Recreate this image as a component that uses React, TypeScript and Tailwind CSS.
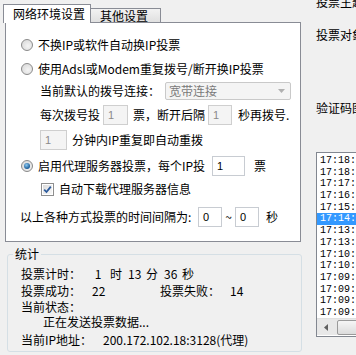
import React from 'react';

const Radio = ({ checked }: { checked?: boolean }) => (
  <span className="w-[12px] h-[12px] rounded-full border border-[#8a8a8a] bg-[radial-gradient(circle_at_60%_60%,#f4f4f4,#d4d4d4)] flex items-center justify-center shrink-0">
    {checked && (
      <span className="w-[6px] h-[6px] rounded-full bg-[radial-gradient(circle_at_40%_35%,#8ccaf2,#1a5a96_70%)]" />
    )}
  </span>
);

const Check = () => (
  <span className="w-[13px] h-[13px] border border-[#8f8f8f] bg-white flex items-center justify-center shrink-0">
    <span className="w-[9px] h-[9px] bg-gradient-to-br from-[#dcdcdc] to-[#f8f8f8] flex items-center justify-center">
      <svg width="9" height="9" viewBox="0 0 9 9">
        <path d="M1.2 4.6 L3.5 7 L7.8 1.6" fill="none" stroke="#2b5a9c" strokeWidth="1.8" />
      </svg>
    </span>
  </span>
);

const Box = ({ value, disabled, w }: { value: string; disabled?: boolean; w: string }) => (
  <span
    className={`${w} h-[20px] flex items-center pl-[4px] text-[11px] font-['Liberation_Sans',sans-serif] border ${
      disabled ? 'bg-[#f4f4f4] border-[#cfcfcf] text-[#8a8a8a]' : 'bg-white border-[#c8ccd2] text-black'
    }`}
  >
    {value}
  </span>
);

const logs = ['17:18:', '17:18:', '17:17:', '17:16:', '17:15:', '17:14:', '17:13:', '17:13:', '17:10:', '17:10:', '17:09:', '17:09:', '17:09:', '17:09:'];

export default function App() {
  return (
    <div className="w-[356px] h-[355px] bg-[#f0f0f0] overflow-hidden flex text-[12px] leading-[14px] text-black font-['Noto_Sans_CJK_SC','Liberation_Sans',sans-serif]">
      {/* 左侧设置区 */}
      <div className="w-[303px] shrink-0 pl-[5px] pt-[4px] flex flex-col">
        <div className="flex items-end h-[18px]">
          <div className="-ml-[2px] w-[88px] h-[19px] -mb-px relative z-10 bg-white border border-b-0 border-[#898c95] pl-[9px] pt-[2px]">
            网络环境设置
          </div>
          <div className="w-[70px] h-[14px] border border-b-0 border-l-0 border-[#898c95] bg-gradient-to-b from-[#f2f2f2] to-[#e0e0e0] pl-[9px] leading-[13px]">
            其他设置
          </div>
        </div>
        <div className="w-[296px] h-[220px] border border-[#898c95] bg-white flex flex-col">
          <div className="mt-[15px] h-[14px] flex items-center pl-[15px] gap-[5px]">
            <Radio />
            <span>不换IP或软件自动换IP投票</span>
          </div>
          <div className="mt-[10px] h-[14px] flex items-center pl-[15px] gap-[5px]">
            <Radio />
            <span>使用Adsl或Modem重复拨号/断开换IP投票</span>
          </div>
          <div className="mt-[6px] h-[18px] flex items-center pl-[34px]">
            <span className="w-[125px]">当前默认的拨号连接：</span>
            <span className="w-[126px] h-[18px] border border-[#c9c9c9] rounded-[2px] bg-[#f4f4f4] flex items-center justify-between pl-[3px] pr-[5px] text-[#7a7a7a]">
              宽带连接
              <svg width="7" height="4" viewBox="0 0 7 4">
                <path d="M0 0 H7 L3.5 4 Z" fill="#b0b0b0" />
              </svg>
            </span>
          </div>
          <div className="mt-[5px] h-[20px] flex items-center pl-[34px]">
            <span className="w-[63px]">每次拨号投</span>
            <Box value="1" disabled w="w-[25px]" />
            <span className="ml-[5px] w-[75px]">票，断开后隔</span>
            <Box value="1" disabled w="w-[24px]" />
            <span className="ml-[6px]">秒再拨号.</span>
          </div>
          <div className="mt-[5px] h-[20px] flex items-center pl-[34px]">
            <Box value="1" disabled w="w-[27px]" />
            <span className="ml-[5px]">分钟内IP重复即自动重拨</span>
          </div>
          <div className="mt-[6px] h-[19px] flex items-center pl-[15px]">
            <Radio checked />
            <span className="ml-[5px] w-[174px]">启用代理服务器投票，每个IP投</span>
            <Box value="1" w="w-[33px]" />
            <span className="ml-[9px]">票</span>
          </div>
          <div className="mt-[7px] h-[14px] flex items-center pl-[35px] gap-[5px]">
            <Check />
            <span>自动下载代理服务器信息</span>
          </div>
          <div className="mt-[11px] h-[20px] flex items-center pl-[14px]">
            <span className="w-[178px]">以上各种方式投票的时间间隔为:</span>
            <Box value="0" w="w-[24px]" />
            <span className="w-[13px] text-center">~</span>
            <Box value="0" w="w-[24px]" />
            <span className="ml-[7px]">秒</span>
          </div>
        </div>

        {/* 统计 */}
        <fieldset className="mt-[5px] ml-[2px] w-[295px] h-[105px] border border-[#d5dfe5] rounded-[3px] px-[13px]">
          <legend className="ml-[-8px] px-[2px] leading-[14px]">统计</legend>
          <div className="flex flex-col">
            <div className="mt-[6px] h-[14px] flex items-center">
              <span className="w-[71px]">投票计时：</span>
              <span className="w-[12px] text-center">1</span>
              <span className="w-[24px] text-center">时</span>
              <span className="w-[12px] text-center">13</span>
              <span className="w-[24px] text-center">分</span>
              <span className="w-[12px] text-center">36</span>
              <span className="w-[24px] text-center">秒</span>
            </div>
            <div className="mt-[3px] h-[14px] flex items-center">
              <span className="w-[71px]">投票成功：</span>
              <span className="w-[68px]">22</span>
              <span className="w-[70px]">投票失败：</span>
              <span>14</span>
            </div>
            <div className="mt-[2px] h-[14px] flex items-center">当前状态：</div>
            <div className="mt-[1px] h-[14px] flex items-center pl-[22px]">正在发送投票数据...</div>
            <div className="mt-[4px] h-[14px] flex items-center">
              <span className="w-[82px]">当前IP地址：</span>
              <span>200.172.102.18:3128(代理)</span>
            </div>
          </div>
        </fieldset>
      </div>

      {/* 右侧 */}
      <div className="flex-1 flex flex-col pl-[13px] whitespace-nowrap">
        <div className="-mt-[5px] h-[14px]">投票主题</div>
        <div className="mt-[19px] h-[14px]">投票对象</div>
        <div className="mt-[59px] h-[14px]">验证码图</div>
        <div className="mt-[37px] h-[185px] -mr-[20px] border border-[#828790] bg-white flex flex-col overflow-hidden">
          <div className="h-[165px] pt-[2px] overflow-hidden font-['Liberation_Mono',monospace] text-[10px]">
            {logs.map((t, i) => (
              <div
                key={i}
                className={`h-[11.7px] leading-[11.7px] pl-[3px] ${i === 5 ? 'bg-[#3399ff] text-white' : ''}`}
              >
                {t}
              </div>
            ))}
          </div>
          <div className="h-[17px] bg-[#e8e8e8] flex items-center border-t border-[#e0e0e0]">
            <span className="w-[17px] flex items-center justify-center">
              <svg width="4" height="7" viewBox="0 0 4 7">
                <path d="M4 0 V7 L0 3.5 Z" fill="#606060" />
              </svg>
            </span>
            <span className="ml-[3px] flex-1 h-[15px] rounded-[2px] border border-[#9a9a9a] bg-gradient-to-b from-[#f6f6f6] to-[#dcdcdc]" />
          </div>
        </div>
      </div>
    </div>
  );
}
